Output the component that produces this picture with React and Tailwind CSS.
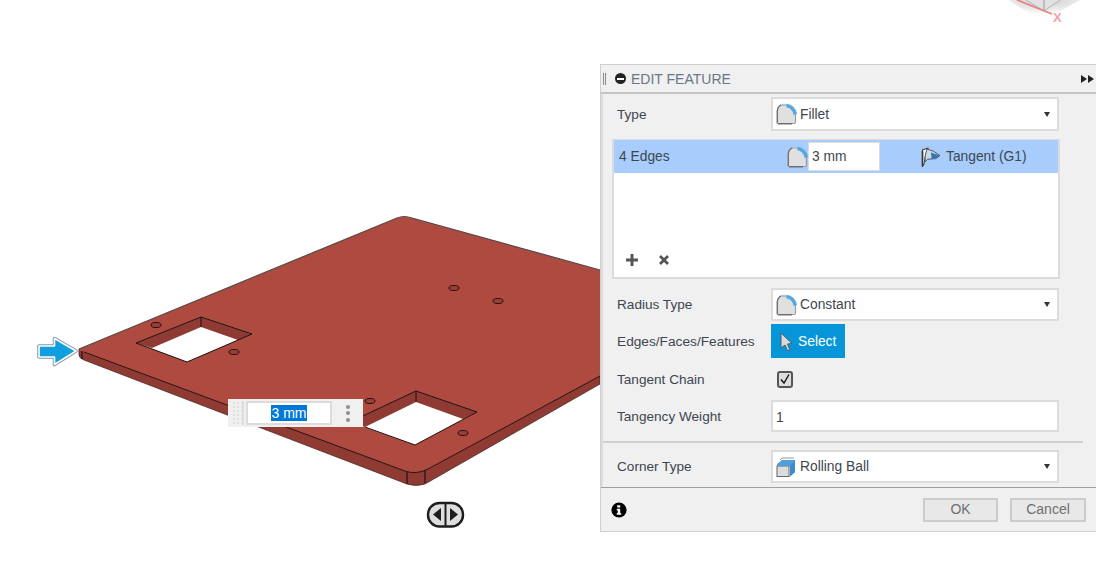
const font = { fontFamily: '"Liberation Sans", Arial, sans-serif' };

function FilletIcon({ className = "" }) {
  return (
    <svg viewBox="0 0 21 22" className={"w-[21px] h-[22px] shrink-0 " + className}>
      <path d="M1.5 20.5 V8 Q1.5 4 5 2 H10 Q18 3 19.5 12 V19 Q19.5 20.5 18 20.5 Z" fill="#e0e0e0" stroke="#9a9a9a" strokeWidth="1.2" />
      <path d="M2 20.8 H16" stroke="#666" strokeWidth="1.3" />
      <path d="M1.2 20 V8 Q1.5 4 5 2" fill="none" stroke="#707070" strokeWidth="1.2" />
      <path d="M10.5 2.5 Q17.5 3.5 19.4 11.5" fill="none" stroke="#5aa7e0" strokeWidth="3.6" />
      <path d="M6 1.5 H10" stroke="#9cc8ea" strokeWidth="1.4" />
    </svg>
  );
}

function TangentIcon() {
  return (
    <svg viewBox="0 0 20 20" className="w-[20px] h-[20px] shrink-0">
      <path d="M1.5 19 V3 L7 1 L6.5 5 Q3.5 10 3 17 Z" fill="#fff" stroke="#444" strokeWidth="1.1" />
      <path d="M1.5 19.5 V4" stroke="#333" strokeWidth="1.6" />
      <path d="M6 2 Q12 3 19 8.5 Q15 13 10 12 Q6 11 4 15 Q3.5 8 6 2 Z" fill="#c9dbea" stroke="#555" strokeWidth="1" />
      <path d="M10 5.5 L18.5 8.5 Q15 12.5 10.5 11.5 Z" fill="#2f78b5" />
    </svg>
  );
}

function CornerIcon() {
  return (
    <svg viewBox="0 0 21 20" className="w-[21px] h-[20px] shrink-0">
      <rect x="1" y="9" width="12" height="10.5" fill="#dcdcdc" stroke="#666" strokeWidth="1" />
      <path d="M4 3 L6 1 H18" fill="none" stroke="#999" strokeWidth="1" />
      <path d="M1 7 L6 3 H19 V15 L14 19.5 V9 H1 Z" fill="#4f9fdc" />
      <path d="M14 9 V19.5 L19 15 V4 Z" fill="#3b8dcf" />
    </svg>
  );
}

function Caret() {
  return <span className="ml-auto mr-[7px] w-0 h-0 border-x-[3.5px] border-x-transparent border-t-[5px] border-t-[#333]" />;
}

function SelectBox({ label, icon, h = "h-[33px]" }) {
  return (
    <div className={"w-[288px] flex items-center bg-white border-2 border-[#dcdcdc] pl-[3px] " + h}>
      {icon}
      <span className="ml-[3px] pt-[2px] text-[13.8px] text-[#3f4650]">{label}</span>
      <Caret />
    </div>
  );
}

function Label({ children, className = "text-[13.6px]" }) {
  return <div className={"w-[154px] shrink-0 pt-[2px] text-[#3f4650] " + className}>{children}</div>;
}

function Row({ label, labelClass, className = "", children }) {
  return (
    <div className={"flex items-center pl-[14px] " + className}>
      <Label className={labelClass}>{label}</Label>
      {children}
    </div>
  );
}

function Plate() {
  const holes = [[156, 325], [234, 352], [370, 401], [463, 433], [454, 288], [498, 301]];
  return (
    <svg className="absolute left-0 top-0 w-[1096px] h-[582px]" viewBox="0 0 1096 582">
      <defs>
        <radialGradient id="cubeShade" cx="50%" cy="0%" r="70%">
          <stop offset="0%" stopColor="#c8c8c8" />
          <stop offset="70%" stopColor="#ececec" />
          <stop offset="100%" stopColor="#ffffff" />
        </radialGradient>
      </defs>
      <path d="M1008 0 L1030 14 L1044 20 L1066 8 L1080 0 Z" fill="url(#cubeShade)" />
      <path d="M1026 0 L1044 11 L1060 0" fill="#e2e2e2" stroke="#b5b5b5" strokeWidth="1" />
      <path d="M1044 0 V11" stroke="#999" strokeWidth="1" />
      <path d="M1017 0 L1052 14" stroke="#e87f82" strokeWidth="1.8" />
      <text x="1053" y="22" fontSize="13" fontWeight="700" fill="#f7a0a3" style={font}>X</text>

      <path d="M79 349 V355 Q79 358 84 360 L407 484 Q416 487 425 484 L600 384 V376 L425 470 L407 472 Z" fill="#8f3b33" stroke="#4a2a26" strokeWidth=".8" />
      <path d="M79 349 L397 218 Q404 215 412 218 L600 270 V376 L428 469 Q416 475 405 471 L84 352 Q80 351 79 349 Z" fill="#ae4a40" />
      <path d="M79 349 L397 218 Q404 215 412 218 L600 270" fill="none" stroke="#554a48" strokeWidth="1.2" />
      <path d="M84 352 L405 471 Q416 475 428 469 L600 376" fill="none" stroke="#2c1512" strokeWidth="1" />
      <path d="M407 472 V484 M425 470 V483 M82 351 V359" stroke="#1b0d0b" strokeWidth="1.1" />

      <path d="M136 343 L201 317 L252 334 L187 362 Z" fill="#ffffff" />
      <path d="M136 343 L201 317 L252 334 L238 340 L201 327 L152 348 Z" fill="#8f3b33" />
      <path d="M136 343 L201 317 L252 334 L187 362 L136 343 M201 317 V327" fill="none" stroke="#1e0f0d" strokeWidth="1" />

      <path d="M350 422 L416 391 L477 412 L415 445 Z" fill="#ffffff" />
      <path d="M350 422 L416 391 L477 412 L463 419 L416 402 L365 427 Z" fill="#8f3b33" />
      <path d="M350 422 L416 391 L477 412 L415 445 L365 427 M416 391 V402" fill="none" stroke="#1e0f0d" strokeWidth="1" />

      {holes.map(([x, y]) => (
        <ellipse key={x} cx={x} cy={y} rx="5" ry="2.5" fill="#9b4037" stroke="#24110e" strokeWidth="1" />
      ))}

      <path d="M39 346 H54.5 V338.5 L76 351 L54.5 364.5 V357 H39 Z" fill="#0f9fdf" stroke="#7f97b0" strokeWidth="3.6" strokeLinejoin="round" />
      <path d="M39 346 H54.5 V338.5 L76 351 L54.5 364.5 V357 H39 Z" fill="#0f9fdf" stroke="#ffffff" strokeWidth="1.6" strokeLinejoin="round" />

      <rect x="428" y="503" width="35" height="23.5" rx="11.5" fill="#dedede" stroke="#1d1d1d" strokeWidth="2.4" />
      <path d="M445.5 503 V526" stroke="#1d1d1d" strokeWidth="2" />
      <path d="M441 508 V521 L433 514.5 Z M450 508 V521 L458 514.5 Z" fill="#1d1d1d" />
    </svg>
  );
}

function FloatInput() {
  return (
    <div className="absolute left-[228px] top-[399px] w-[135px] h-[28px] bg-[#f0f0f0] flex items-center">
      <div className="w-[12px] ml-[4px] h-[24px] border-r-2 border-[#dcdcdc] bg-[radial-gradient(#d0d0d0_0.6px,transparent_0.8px)] bg-[length:4px_4px]" />
      <div className="ml-[2px] w-[86px] h-[24px] bg-white border-2 border-[#dcdcdc] flex items-center justify-center">
        <span className="bg-[#0078d7] text-white text-[14px] leading-[16px] px-[0.5px]">3 mm</span>
      </div>
      <div className="ml-[14px] flex flex-col gap-[2.5px]">
        <span className="w-[4px] h-[4px] rounded-full bg-[#8f8f8f]" />
        <span className="w-[4px] h-[4px] rounded-full bg-[#8f8f8f]" />
        <span className="w-[4px] h-[4px] rounded-full bg-[#8f8f8f]" />
      </div>
    </div>
  );
}

function Panel() {
  return (
    <div className="absolute left-[600px] top-[64px] w-[496px] h-[468px] bg-[#f0f0f0] border-y border-l border-[#cfcfcf] flex flex-col">
      <div className="h-[27px] shrink-0 flex items-center border-b-2 border-[#c4c4c4] box-content">
        <span className="ml-[2px] w-[3px] h-[12px] border-x border-[#8a8a8a]" />
        <span className="ml-[9px] w-[11px] h-[11px] rounded-full bg-[#222] flex items-center justify-center">
          <span className="w-[7px] h-[2px] bg-white" />
        </span>
        <span className="ml-[5px] pt-[2px] text-[14px] text-[#6b7785]">EDIT FEATURE</span>
        <svg viewBox="0 0 13 8" className="ml-auto mr-[2px] w-[13px] h-[8px]">
          <path d="M0 0 L6 4 L0 8 Z M7 0 L13 4 L7 8 Z" fill="#222" />
        </svg>
      </div>

      <div className="flex-1 flex flex-col border-l-2 border-[#dedede] min-h-0">
        <Row label="Type" className="mt-[3px]">
          <SelectBox label="Fillet" h="h-[34px]" icon={<FilletIcon />} />
        </Row>

        <div className="mt-[8px] ml-[9px] w-[448px] h-[140px] bg-white border-2 border-[#dcdcdc] flex flex-col">
          <div className="h-[33px] bg-[#a8cdfd] flex items-center text-[13.8px] text-[#3f4650] -mt-px">
            <span className="ml-[5px] pt-[2px] w-[168px]">4 Edges</span>
            <FilletIcon />
            <span className="w-[72px] h-[29px] bg-white border border-[#dcdcdc] flex items-center pl-[3px] pt-[2px]">3 mm</span>
            <span className="ml-[41px]"><TangentIcon /></span>
            <span className="ml-[5px] pt-[2px]">Tangent (G1)</span>
          </div>
          <div className="mt-auto mb-[10px] ml-[11px] flex items-center gap-[19px]">
            <svg viewBox="0 0 14 14" className="w-[14px] h-[14px]">
              <path d="M7 1 V13 M1 7 H13" stroke="#555" strokeWidth="3" />
            </svg>
            <svg viewBox="0 0 12 12" className="w-[12px] h-[12px]">
              <path d="M2 2 L10 10 M10 2 L2 10" stroke="#555" strokeWidth="2.8" />
            </svg>
          </div>
        </div>

        <Row label="Radius Type" className="mt-[9px]">
          <SelectBox label="Constant" icon={<FilletIcon />} />
        </Row>

        <Row label="Edges/Faces/Features" labelClass="text-[13.7px]" className="mt-[3px]">
          <div className="w-[74px] h-[34px] bg-[#0696d7] flex items-center">
            <svg viewBox="0 0 13 19" className="ml-[9px] w-[13px] h-[19px]">
              <path d="M1 1 L12 11.5 L7.5 12 L10 18 L7.5 18.5 L5 13 L1 16 Z" fill="#d5dade" stroke="#4f5b64" strokeWidth="1" />
            </svg>
            <span className="ml-[5px] pt-[2px] text-[13.8px] text-white">Select</span>
          </div>
        </Row>

        <Row label="Tangent Chain" className="mt-[4px] h-[34px]">
          <div className="ml-[6px] w-[16px] h-[17px] rounded-[3px] bg-[#dedede] border-2 border-[#555] flex items-center justify-center">
            <svg viewBox="0 0 12 12" className="w-[12px] h-[12px]">
              <path d="M2 6.5 L5 10 L10 1.5" fill="none" stroke="#111" strokeWidth="1.4" />
            </svg>
          </div>
        </Row>

        <Row label="Tangency Weight" className="mt-[4px]">
          <div className="w-[288px] h-[32px] bg-white border-2 border-[#dcdcdc] flex items-center pl-[3px] pt-[2px] text-[14px] text-[#3f4650]">1</div>
        </Row>

        <div className="mt-[9px] h-[2px] w-[480px] bg-[#d0d0d0]" />

        <Row label="Corner Type" className="mt-[7px]">
          <SelectBox label="Rolling Ball" icon={<CornerIcon />} />
        </Row>
      </div>

      <div className="h-[44px] shrink-0 border-t border-[#a0a0a0] flex items-center">
        <svg viewBox="0 0 16 16" className="ml-[10px] w-[16px] h-[16px]">
          <circle cx="8" cy="8" r="7.6" fill="#000" />
          <path d="M6.2 3.2 H9.2 V5.6 H6.2 Z M5.8 6.8 H9.2 V11 H10.2 V12.8 H5.8 V11 H6.8 V8.6 H5.8 Z" fill="#fff" />
        </svg>
        <div className="ml-auto w-[75px] h-[24px] bg-[#e8e8e8] border-2 border-[#cccccc] flex items-center justify-center text-[14px] text-[#6f6f6f]">OK</div>
        <div className="ml-[12px] mr-[10px] w-[76px] h-[24px] bg-[#e8e8e8] border-2 border-[#cccccc] flex items-center justify-center text-[14px] text-[#6f6f6f]">Cancel</div>
      </div>
    </div>
  );
}

export default function App() {
  return (
    <div className="relative w-[1096px] h-[582px] bg-white overflow-hidden" style={font}>
      <Plate />
      <FloatInput />
      <Panel />
    </div>
  );
}
